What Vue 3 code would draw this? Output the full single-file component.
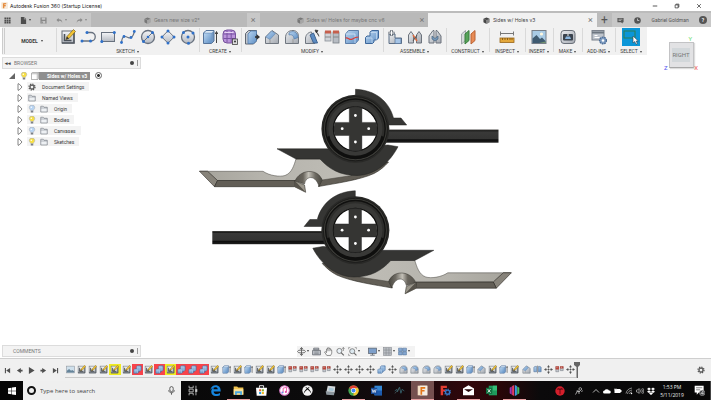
<script setup>
import { ref } from 'vue'

const groups = [
  { name: 'SKETCH', cls: 'w-sketch', icons: ['sketch', 'line', 'rect', 'spline', 'circle', 'polygon', 'circle3'] },
  { name: 'CREATE', cls: 'w-create', icons: ['box', 'form'] },
  { name: 'MODIFY', cls: 'w-modify', icons: ['presspull', 'chamfer', 'fillet', 'draft', 'table', 'split', 'combine'] },
  { name: 'ASSEMBLE', cls: 'w-assemble', icons: ['component', 'joint', 'asbuilt'] },
  { name: 'CONSTRUCT', cls: 'w-construct', icons: ['plane'] },
  { name: 'INSPECT', cls: 'w-inspect', icons: ['measure'] },
  { name: 'INSERT', cls: 'w-insert', icons: ['image'] },
  { name: 'MAKE', cls: 'w-make', icons: ['printer'] },
  { name: 'ADD-INS', cls: 'w-addins', icons: ['addin'] },
  { name: 'SELECT', cls: 'w-select', icons: ['select'] },
]

const tree = [
  { label: 'Document Settings', icon: 'gear' },
  { label: 'Named Views', icon: 'folder' },
  { label: 'Origin', icon: 'folder', bulb: 'off' },
  { label: 'Bodies', icon: 'folder', bulb: 'on' },
  { label: 'Canvases', icon: 'folder', bulb: 'off' },
  { label: 'Sketches', icon: 'folder', bulb: 'on' },
]

const codes = {
  i: 'canvas', s: 'sketch', c: 'combine', e: 'box', j: 'jointorigin', m: 'move', f: 'fillet', h: 'chamfer', r: 'mirror',
}
const history = 'isssYsCsCYCCCsesessejjjjmmmmcmffffssehseshrmjm'.split('').map((k) => {
  const mark = k === 'Y' ? 'yellow' : k === 'C' ? 'red' : ''
  const key = k === 'Y' ? 's' : k.toLowerCase()
  return { icon: codes[key], mark }
})

const navTools = ['orbit', 'look', 'hand', 'zoom', 'fit']
const displayTools = ['monitor', 'grid', 'views']
const play = ['first', 'prev', 'play', 'next', 'last']

const apps = [
  { icon: 'taskview' }, { icon: 'edge' }, { icon: 'explorer', open: true }, { icon: 'store' }, { icon: 'itunes' },
  { icon: 'xbox' }, { icon: 'drive' }, { icon: 'chrome', open: true }, { icon: 'word' }, { icon: 'sonic' },
  { icon: 'fusion', open: true, active: true }, { icon: 'freecad' }, { icon: 'mail', open: true }, { icon: 'excel' },
  { icon: 'stripes', open: true },
]
const tray = ['pen', 'chevron', 'cloud', 'battery', 'wifi', 'sound', 'dropbox']
const query = ref('')
</script>

<template>
  <div class="app">
    <svg class="defs" aria-hidden="true">
      <defs>
        <linearGradient id="blue" x1="0" y1="0" x2="1" y2="1"><stop offset="0" stop-color="#b9d5f0" /><stop offset="1" stop-color="#5f8fc4" /></linearGradient>
        <linearGradient id="grey" x1="0" y1="0" x2="0" y2="1"><stop offset="0" stop-color="#f5f6f8" /><stop offset="1" stop-color="#b4b9c1" /></linearGradient>
        <linearGradient id="dim" x1="0" y1="0" x2="1" y2="1"><stop offset="0" stop-color="#eceef1" /><stop offset="1" stop-color="#a3a8b0" /></linearGradient>
      </defs>
      <symbol id="sketch" viewBox="0 0 16 16"><rect x="2" y="2" width="12" height="12" fill="url(#grey)" stroke="#666c75" /><path d="M2 14h12V2" fill="none" stroke="#555b63" stroke-width="1.600" /><path d="M4.500 5v6.500h7" fill="none" stroke="#4a5058" stroke-width="1.500" /><path d="M6 10.500l1-3 6.500-7 2 2-6.500 7z" fill="#f3c435" stroke="#7d6420" stroke-width=".7" /><path d="M6 10.500l1-3 2 2z" fill="#333" /></symbol>
      <symbol id="line" viewBox="0 0 16 16"><path d="M2 12h9a4 4 0 0 0 0-8.500H7" fill="none" stroke="#68717e" stroke-width="1.300" /><g fill="#2f70c8"><circle cx="2" cy="12" r="1.500" /><circle cx="10.500" cy="12" r="1.500" /><circle cx="7" cy="3.500" r="1.500" /></g></symbol>
      <symbol id="rect" viewBox="0 0 16 16"><rect x="1.500" y="3.500" width="13" height="9" fill="url(#grey)" stroke="#68717e" /><g fill="#2f70c8"><circle cx="1.800" cy="12.500" r="1.500" /><circle cx="14.300" cy="3.500" r="1.500" /></g></symbol>
      <symbol id="spline" viewBox="0 0 16 16"><path d="M1.500 14C2 6 5 7 8 8.500S13 8 14.500 2.500" fill="none" stroke="#68717e" stroke-width="1.200" /><g fill="#2f70c8"><circle cx="1.500" cy="13.500" r="1.400" /><circle cx="4" cy="7.500" r="1.400" /><circle cx="11" cy="8.500" r="1.400" /><circle cx="14.300" cy="2.500" r="1.400" /></g></symbol>
      <symbol id="circle" viewBox="0 0 16 16"><circle cx="8" cy="8" r="6.500" fill="url(#grey)" stroke="#68717e" stroke-width="1.300" /><path d="M3.500 12.500l9-9" stroke="#68717e" /><g fill="#2f70c8"><circle cx="3.500" cy="12.500" r="1.500" /><circle cx="8" cy="8" r="1.300" /><circle cx="12.500" cy="3.500" r="1.500" /></g></symbol>
      <symbol id="polygon" viewBox="0 0 16 16"><path d="M8 1.800L14.200 8 8 14.200 1.800 8z" fill="url(#grey)" stroke="#68717e" /><g fill="#2f70c8"><circle cx="8" cy="2" r="1.500" /><circle cx="14" cy="8" r="1.500" /><circle cx="8" cy="14" r="1.500" /><circle cx="2" cy="8" r="1.500" /></g></symbol>
      <symbol id="circle3" viewBox="0 0 16 16"><circle cx="8" cy="8" r="6.500" fill="url(#grey)" stroke="#68717e" stroke-width="1.300" /><g fill="#2f70c8"><circle cx="3.500" cy="3.500" r="1.500" /><circle cx="8" cy="8" r="1.500" /><circle cx="13" cy="4" r="1.500" /><circle cx="8.500" cy="14.300" r="1.500" /></g></symbol>
      <symbol id="box" viewBox="0 0 16 16"><path d="M1.500 4L4 1.500h8V12l-2.500 2.500h-8z" fill="#7399c4" stroke="#56749b" /><path d="M2 4.500h7.500v9.500H2z" fill="url(#blue)" /><path d="M2.500 3.800L4.300 2H11.500L9.700 3.800z" fill="#dbe9f6" /><path d="M14.500 14V3m-1.300 2l1.300-2.500L15.700 5" fill="none" stroke="#444" /></symbol>
      <symbol id="form" viewBox="0 0 16 16"><rect x="1" y="1" width="12.500" height="13" rx="4" fill="#b993da" stroke="#74519a" /><path d="M5 1.500v12M9.200 1.500v12M1.500 5h12M1.500 9.500h12" stroke="#7a54a3" /><path d="M2.500 3.500h9" stroke="#e7d5f5" /><rect x="10.500" y="10" width="5" height="5.500" fill="#ddd" stroke="#444" stroke-width=".8" /><circle cx="13" cy="12.500" r="1" fill="#333" /></symbol>
      <symbol id="presspull" viewBox="0 0 16 16"><path d="M1.500 4.500L4.500 1.500h8V12l-3 3h-8z" fill="#c1c6cd" stroke="#5f6772" /><path d="M4 5l3-3h5.500V12l-3 2.500H4z" fill="url(#blue)" stroke="#547eae" stroke-width=".8" /><path d="M11 8h4" stroke="#333" stroke-width="1.600" /><path d="M12.500 5L16 8l-3.500 3z" fill="#333" /></symbol>
      <symbol id="chamfer" viewBox="0 0 16 16"><path d="M1.500 8L8 1.500l6.500 4.500v8.500h-13z" fill="url(#dim)" stroke="#707780" /><path d="M1.800 8L7.500 2l4 2.500L6 10.500z" fill="url(#blue)" stroke="#698bb3" stroke-width=".7" /><path d="M6 10.500V14" stroke="#999" /></symbol>
      <symbol id="fillet" viewBox="0 0 16 16"><path d="M1.500 14.500V9C1.500 4 4.500 1.500 9 1.500c4 0 5.500 3 5.500 6v7z" fill="url(#dim)" stroke="#707780" /><path d="M5 4c4-3 8.500-1 9 4.500l-4 1.500C10 7 8 5 5 6z" fill="url(#blue)" stroke="#547eae" stroke-width=".7" /><path d="M9 10v4" stroke="#999" /></symbol>
      <symbol id="draft" viewBox="0 0 16 16"><path d="M1.500 14.500V9C2 5 5 3 7.500 3L11 14.500z" fill="url(#dim)" stroke="#707780" /><path d="M6 6l3.500-2 4 10H9.500z" fill="#5c8bc2" stroke="#406591" /><path d="M11.500 2.500c2 1 3 3 3.500 5M11 1l3 .5-1.500 2.500z" fill="#333" stroke="#333" stroke-width=".7" /></symbol>
      <symbol id="table" viewBox="0 0 16 16"><rect x="1" y="3" width="6" height="9" fill="#cfd3d8" stroke="#8b9198" stroke-width=".8" /><rect x="9" y="3" width="6" height="11" fill="#b7bcc3" stroke="#777d85" stroke-width=".8" /><path d="M1 1.500h6v3H1zM9 1.500h6v3H9z" fill="#c65f4c" /><path d="M1 8h6M9 8h6" stroke="#888" /></symbol>
      <symbol id="jointorigin" viewBox="0 0 16 16"><path d="M1.500 3h5v9h-5zM9.500 3h5v7h-5z" fill="#c3c7cd" stroke="#777d85" /><path d="M1 2h6v6H1zM9 2h6v4H9z" fill="#b9483c" /><path d="M2.500 4h2M10.500 4h2" stroke="#e9c5bf" stroke-width="1.200" /></symbol>
      <symbol id="split" viewBox="0 0 16 16"><path d="M1.500 5l3-3.500h10V11l-3 3.500h-10z" fill="url(#blue)" stroke="#5d7fa9" /><path d="M1.500 5H11v9" fill="none" stroke="#dceafa" stroke-width=".7" /><path d="M1.500 9c3-1 4 3 7 1s4-2 6-2" fill="none" stroke="#db3c36" stroke-width="1.200" /></symbol>
      <symbol id="combine" viewBox="0 0 16 16"><path d="M6 3l2-1.500h6.500V9l-2 2H10v2l-1.500 1.500h-7V8.500L3 7h3z" fill="url(#blue)" stroke="#3c669a" /><path d="M2 9h6v5M6.500 3.500h6v7" fill="none" stroke="#d9e8f8" stroke-width=".6" /></symbol>
      <symbol id="component" viewBox="0 0 16 16"><path d="M2 5h6v4h6.500v5.500H2z" fill="url(#dim)" stroke="#5b6e86" /><path d="M8 9.500h6v5H8z" fill="#a5c4e6" stroke="#587396" stroke-width=".7" /><path d="M4.500 1v6M1.500 4h6" stroke="#525b66" stroke-width="2.400" /><path d="M4.500 1.500v5M2 4h5" stroke="#fff" /></symbol>
      <symbol id="joint" viewBox="0 0 16 16"><path d="M1.500 14V6L4 2.500 6.500 6v8zM9.500 14V6L12 2.500 14.500 6v8z" fill="url(#dim)" stroke="#6c737c" /><path d="M6 6l4 6" stroke="#de6d42" stroke-width="1.500" /><path d="M6 12l4-6" stroke="#555" /></symbol>
      <symbol id="asbuilt" viewBox="0 0 16 16"><path d="M2 14V7l4-5.500h1V14zM9 14V1.500h1L14 7v7z" fill="url(#dim)" stroke="#6c737c" /><path d="M5 7l3 2.500L11 7v3l-3 2-3-2z" fill="#7599bb" stroke="#4c6680" stroke-width=".7" /></symbol>
      <symbol id="mirror" viewBox="0 0 16 16"><path d="M1.500 4l2-1.500h3V12h-5zM9.500 2.500h3l2 1.500v8h-5z" fill="url(#blue)" stroke="#53729a" /><path d="M8 1v14" stroke="#666" /></symbol>
      <symbol id="plane" viewBox="0 0 16 16"><path d="M1.500 5l4-3.500v10l-4 3.500z" fill="#d7dadc" stroke="#92989e" stroke-width=".8" /><path d="M5 5l4-3.500v10L5 15z" fill="#56a35a" stroke="#397d3d" /><path d="M11 5l4-3.500v10L11 15z" fill="#e88b55" stroke="#ba6334" /></symbol>
      <symbol id="measure" viewBox="0 0 16 16"><path d="M1 4.500h14M1.500 2.500v4m13-4v4" stroke="#777" /><rect x="1" y="9" width="14" height="4.500" fill="#e4a83b" stroke="#98651a" stroke-width=".8" /><path d="M3.500 9v2M6 9v2M8.500 9v2M11 9v2M13 9v2" stroke="#7a5010" stroke-width=".8" /></symbol>
      <symbol id="image" viewBox="0 0 16 16"><rect x="1" y="1.500" width="14" height="13" fill="#a9cbe5" stroke="#777e87" /><circle cx="10.500" cy="5" r="1.600" fill="#fff8df" /><path d="M1.500 14V9.500l4-3.500 3.500 4 2-1.500L14.500 12v2z" fill="#3f5b71" /><path d="M8 14l6.500-1.500V14z" fill="#73936d" /></symbol>
      <symbol id="canvas" viewBox="0 0 16 16"><rect x="1" y="2" width="14" height="12" fill="#cfe0ec" stroke="#8d949c" /><path d="M1.500 13.500V10l4-3 3.500 3 2-1 3.500 2v2.500z" fill="#66849a" /></symbol>
      <symbol id="printer" viewBox="0 0 16 16"><rect x="1" y="1.500" width="14" height="13" rx="3" fill="url(#dim)" stroke="#6a7079" /><rect x="3" y="5" width="10" height="6.500" rx="1" fill="#39424d" /><path d="M5 10l1-2.500h4l1 2.500z" fill="#8ab6df" /><path d="M8 5v2" stroke="#eee" /></symbol>
      <symbol id="addin" viewBox="0 0 16 16"><rect x="1" y="1.500" width="12" height="9.500" fill="#bec4cc" stroke="#7b828c" /><path d="M1 3.500h12" stroke="#6d7680" stroke-width="2" /><path d="M3.500 6.500h3M3.500 8.500h5" stroke="#fff" /><circle cx="12" cy="11.500" r="3.400" fill="#7e9cc1" stroke="#4c6c95" stroke-dasharray="1.600 .8" stroke-width="1.300" /><circle cx="12" cy="11.500" r="1.200" fill="#fff" /></symbol>
      <symbol id="select" viewBox="0 0 18 18"><rect width="18" height="18" fill="#0b96d8" /><rect x="2" y="3" width="11" height="7" fill="none" stroke="#2c7f55" /><path d="M11 8v7l1.700-1.500 1.300 2.800 1.400-.7-1.300-2.600h2.200z" fill="#fff" stroke="#35424d" stroke-width=".6" /></symbol>
      <symbol id="cube" viewBox="0 0 16 16"><path d="M1 4l7-3 7 3v8l-7 4-7-4z" fill="currentColor" /><path d="M8 7v9l7-4V4z" fill="#fff" opacity=".35" /><path d="M1 4l7 3v9" fill="none" stroke="#eee" stroke-width=".5" /></symbol>
      <symbol id="apps" viewBox="0 0 16 16"><path d="M1 1h4v4H1zM6 1h4v4H6zM11 1h4v4h-4zM1 6h4v4H1zM6 6h4v4H6zM11 6h4v4h-4zM1 11h4v4H1zM6 11h4v4H6zM11 11h4v4h-4z" fill="#4d4d4d" /></symbol>
      <symbol id="file" viewBox="0 0 16 16"><path d="M2 0h7v5h5v11H2zM10 0l4 4h-4z" fill="#4d4d4d" /></symbol>
      <symbol id="save" viewBox="0 0 16 16"><path d="M1 1h14v14H1z" fill="#888" /><path d="M4 1h8v5H4zM4 9h8v6H4z" fill="#c6c6c6" /><path d="M5 10h2v4H5z" fill="#888" /></symbol>
      <symbol id="undo" viewBox="0 0 16 16"><path d="M6 2L1 7l5 5V9c5-1 7 1 8 5 1-6-2-9-8-9z" fill="#8b8b8b" /></symbol>
      <symbol id="gear" viewBox="0 0 16 16"><circle cx="8" cy="8" r="6" fill="none" stroke="#555" stroke-width="2.500" stroke-dasharray="2.600 2.100" /><circle cx="8" cy="8" r="4" fill="none" stroke="#555" stroke-width="2.500" /></symbol>
      <symbol id="folder" viewBox="0 0 16 16"><path d="M1.500 14V2.500h5l1.500 2h6.500V14z" fill="#edf0f3" stroke="#737981" stroke-width="1.300" /><path d="M1.500 6h13" stroke="#737981" /></symbol>
      <symbol id="bulb" viewBox="0 0 16 16"><path d="M5.500 11C4.500 8.500 2.500 8 2.500 5.200a5.500 5 0 0 1 11 0C13.500 8 11.500 8.500 10.500 11z" fill="currentColor" stroke="#a3a7ad" /><path d="M5.500 11.500h5V15h-5z" fill="#7b7f86" /><circle cx="6.500" cy="4.500" r="1.500" fill="#fff" /></symbol>
      <symbol id="body" viewBox="0 0 16 16"><path d="M1 3l2-2h12v12l-2 2H1z" fill="#fff" stroke="#777" /><path d="M1 3.500h11.500V15M12.500 3.500L15 1" fill="none" stroke="#777" /></symbol>
      <symbol id="move" viewBox="0 0 16 16"><path d="M8 3v10M3 8h10" stroke="#5b5b5b" stroke-width="1.200" stroke-dasharray="3.500 3" /><path d="M8 0l2.500 4h-5zM8 16l2.500-4h-5zM0 8l4-2.500v5zM16 8l-4-2.500v5z" fill="#555" /><rect x="7" y="7" width="2" height="2" fill="#555" /></symbol>
      <symbol id="first" viewBox="0 0 16 16"><path d="M2 2h2.500v12H2zM14 2v12L5 8z" fill="#4f4f4f" /></symbol>
      <symbol id="prev" viewBox="0 0 16 16"><path d="M11 2v12L2 8zM11 6h4v4h-4z" fill="#4f4f4f" /></symbol>
      <symbol id="play" viewBox="0 0 16 16"><path d="M2 0l13 8L2 16z" fill="#4f4f4f" /></symbol>
      <symbol id="next" viewBox="0 0 16 16"><path d="M5 2v12l9-6zM1 6h4v4H1z" fill="#4f4f4f" /></symbol>
      <symbol id="last" viewBox="0 0 16 16"><path d="M11.500 2H14v12h-2.500zM2 2v12l9-6z" fill="#4f4f4f" /></symbol>
      <symbol id="orbit" viewBox="0 0 16 16"><path d="M8 1v14M5.500 3.500L8 1l2.500 2.500M5.500 12.500L8 15l2.500-2.500" fill="none" stroke="#555" stroke-width="1.500" /><ellipse cx="8" cy="8" rx="7" ry="2.700" fill="none" stroke="#555" stroke-width="1.500" /></symbol>
      <symbol id="look" viewBox="0 0 16 16"><path d="M1 6h14v8H1zM3 2h9v3H3z" fill="#bfc3c9" stroke="#5d6269" stroke-width="1.300" /><path d="M4 9h8M4 12h8" stroke="#5d6269" /></symbol>
      <symbol id="hand" viewBox="0 0 16 16"><path d="M5 15L1 9l1.500-1 2 2V3.500h1.800V1.500h2V2h2v1.500h2V6h1.500v5l-2 4z" fill="#fafafa" stroke="#555" stroke-width="1.100" /><path d="M6.500 3.500v4m2-5v5m2-4v4" stroke="#555" stroke-width=".8" /></symbol>
      <symbol id="zoom" viewBox="0 0 16 16"><circle cx="6" cy="7" r="4.500" fill="#eaf2f8" stroke="#666" stroke-width="1.300" /><path d="M9 10l5 5" stroke="#666" stroke-width="2" /><path d="M13 1v6M11 3l2-2 2 2" fill="none" stroke="#444" /></symbol>
      <symbol id="fit" viewBox="0 0 16 16"><path d="M1 4V1h3M12 1h3v3M1 12v3h3" fill="none" stroke="#777" /><circle cx="7.500" cy="7.500" r="4.500" fill="#dce8ef" stroke="#666" stroke-width="1.300" /><path d="M11 11l4 4" stroke="#666" stroke-width="2" /></symbol>
      <symbol id="monitor" viewBox="0 0 16 16"><rect x="1" y="2" width="14" height="9.500" fill="#7d9fca" stroke="#59626e" stroke-width="1.300" /><path d="M4 14.500h8M8 11v3" stroke="#59626e" stroke-width="1.500" /></symbol>
      <symbol id="grid" viewBox="0 0 16 16"><rect x="1" y="1" width="14" height="14" fill="#b9bdc3" stroke="#85898f" /><path d="M5.500 1v14M10.500 1v14M1 5.500h14M1 10.500h14" stroke="#85898f" /></symbol>
      <symbol id="views" viewBox="0 0 16 16"><path d="M1 2h6.500v5.500H1zM8.500 2H15v5.500H8.500zM1 8.500h6.500V14H1zM8.500 8.500H15V14H8.500z" fill="#85a8d2" stroke="#53729a" /></symbol>
      <symbol id="win" viewBox="0 0 16 16"><path d="M0 2.300L7 1.300v6.200H0zM8 1.200L16 0v7.500H8zM0 8.500h7v6.200l-7-1zM8 8.500h8V16l-8-1.200z" fill="#fff" /></symbol>
      <symbol id="mic" viewBox="0 0 16 16"><rect x="5" y="1" width="6" height="9" rx="3" fill="none" stroke="#333" stroke-width="1.300" /><path d="M3 7.500c0 6 10 6 10 0M8 12v3.500" fill="none" stroke="#333" stroke-width="1.300" /></symbol>
      <symbol id="taskview" viewBox="0 0 16 16"><path d="M3 1v3h6V1M3 15v-3h6v3M3 6h6v4H3zM13 1v14" fill="none" stroke="#ccc" stroke-width="1.200" /><path d="M12 6h3v4h-3z" fill="#ccc" /></symbol>
      <symbol id="edge" viewBox="0 0 16 16"><path d="M.5 7.200C1.200 2.800 4.300.3 8.200.3c4.800 0 7.300 3.500 7.300 8v1H5.300c.2 4.600 6 4.400 9.200 2.400v3.200c-5.500 2.600-12.700.9-12.700-5.200 0-3.400 2-5.400 4.200-6.300-.6.700-.8 1.600-.9 2.900h6.200C11.500 1.500 3.500 2.500.5 7.200z" fill="#1685de" /></symbol>
      <symbol id="explorer" viewBox="0 0 16 16"><path d="M1 2h5l1.500 1.500H15V14H1z" fill="#f2c451" /><path d="M1 6h14v8H1z" fill="#fbe29b" /><path d="M3 9h10v5.500h-2.500V12h-5v2.500H3z" fill="#4aa6df" /></symbol>
      <symbol id="store" viewBox="0 0 16 16"><path d="M5 4V1h6v3" fill="none" stroke="#fff" stroke-width="1.300" /><path d="M0 4h16l-1 11.500H1z" fill="#fff" /><path d="M4.500 6.200h3v3h-3z" fill="#e85b37" /><path d="M8.500 6.200h3v3h-3z" fill="#83b82c" /><path d="M4.500 10.200h3v3h-3z" fill="#279fe0" /><path d="M8.500 10.200h3v3h-3z" fill="#f6bb22" /></symbol>
      <symbol id="itunes" viewBox="0 0 16 16"><circle cx="8" cy="8" r="7" fill="#fff" stroke="#d774c4" stroke-width="1.500" /><path d="M6 11V4.500l5-1V10" fill="none" stroke="#e94aa2" stroke-width="1.300" /><circle cx="5" cy="11" r="1.500" fill="#6c86e8" /><circle cx="10" cy="10" r="1.500" fill="#e94aa2" /></symbol>
      <symbol id="xbox" viewBox="0 0 16 16"><circle cx="8" cy="8" r="7.500" fill="#f4f4f4" /><path d="M3 2.500C6 2 7 4 8 4.500 9 4 10 2 13 2.500c-2 0-3 1.500-4 2.700 2.500 2.300 4.500 5 4.500 7.300C12 10 10 8 8 6.500 6 8 4 10 2.500 12.500c0-2.300 2-5 4.500-7.300C6 4 5 2.500 3 2.500z" fill="#111" /></symbol>
      <symbol id="drive" viewBox="0 0 16 16"><path d="M4 1l11 1-1 9-12-1z" fill="#d3d8db" /><path d="M1 9l13 1-1 5-11-1z" fill="#8b969d" /><path d="M6 4l7 1-1 4-7-1z" fill="#a6c5d5" /></symbol>
      <symbol id="chrome" viewBox="0 0 16 16"><circle cx="8" cy="8" r="7.500" fill="#45a651" /><path d="M8 8L1.500 4.200A7.500 7.500 0 0 1 14.500 4.200z" fill="#e34133" /><path d="M8 8l6.500-3.800A7.500 7.500 0 0 1 8 15.500z" fill="#f5c633" /><path d="M8 4.200h6.500L10 10z" fill="#f5c633" /><circle cx="8" cy="8" r="3.700" fill="#fff" /><circle cx="8" cy="8" r="2.900" fill="#4285f4" /></symbol>
      <symbol id="word" viewBox="0 0 16 16"><path d="M5 1h11v14H5z" fill="#3588d5" /><path d="M5 8h11v7H5z" fill="#1c5aad" /><path d="M0 4h9v9H0z" fill="#1b4f9e" /><path d="M1.500 6l1.500 5 1.500-4 1.500 4 1.500-5" fill="none" stroke="#fff" /></symbol>
      <symbol id="sonic" viewBox="0 0 16 16"><path d="M1 9l3-3 1 4 3-7 2 9 2-6 3 3" fill="none" stroke="#355e68" stroke-width="1.300" /><path d="M1 12c3-1 5-6 7-8" stroke="#4d696c" fill="none" /></symbol>
      <symbol id="fusion" viewBox="0 0 16 16"><path d="M1 1h14v14H1z" fill="#f6dfc4" /><path d="M4 1h11v14H4z" fill="#f5ede3" /><path d="M5 3h7v2.300H7.500v2H11v2.200H7.500V14H5z" fill="#e27619" /></symbol>
      <symbol id="freecad" viewBox="0 0 16 16"><path d="M1 1h9v3.500H4.500v2H8v3H4.500V15H1z" fill="#e43c32" /><circle cx="11" cy="10.500" r="3" fill="#22112a" stroke="#3579ca" stroke-width="2" /><circle cx="11" cy="10.500" r="4.500" fill="none" stroke="#3579ca" stroke-dasharray="1.600 1.900" stroke-width="1.500" /></symbol>
      <symbol id="mail" viewBox="0 0 16 16"><path d="M0 5l8-4.500L16 5v10H0z" fill="#fff" /><path d="M1.500 6h13L8 10z" fill="#260508" /></symbol>
      <symbol id="excel" viewBox="0 0 16 16"><path d="M4 1h12v14H4z" fill="#1f9a5c" /><path d="M10 1h6v7h-6z" fill="#35bd77" /><path d="M0 4h9v9H0z" fill="#117340" /><path d="M2.500 6l4 5m0-5l-4 5" stroke="#fff" stroke-width="1.200" /></symbol>
      <symbol id="stripes" viewBox="0 0 16 16"><path d="M1 4l3-2v12l-3-2z" fill="#9b35b4" /><path d="M4.500 1.500L7.500 0v16l-3-1.500z" fill="#e23c64" /><path d="M8.500 0l3 1.500v13l-3 1.500z" fill="#3f9be0" /><path d="M12 2l3 2v8l-3 2z" fill="#42ba63" /></symbol>
      <symbol id="trend" viewBox="0 0 16 16"><circle cx="8" cy="8" r="7.500" fill="#d41f2b" /><path d="M3 5h10M8 5v8M5 3l3 3 3-3" fill="none" stroke="#65080f" stroke-width="1.500" /></symbol>
      <symbol id="pen" viewBox="0 0 16 16"><circle cx="10.500" cy="4" r="2.700" fill="none" stroke="#ddd" stroke-width="1.300" /><path d="M1 15l4-7 3 2 3-3M3 8h5v6M13 10l2-3" fill="none" stroke="#ddd" stroke-width="1.400" /></symbol>
      <symbol id="chevron" viewBox="0 0 16 16"><path d="M2 11l6-6 6 6" fill="none" stroke="#eee" stroke-width="1.500" /></symbol>
      <symbol id="cloud" viewBox="0 0 16 16"><path d="M3 13a3 3 0 0 1 0-6 5 4.500 0 0 1 9 0 3 3 0 0 1 1 6z" fill="#fff" /></symbol>
      <symbol id="battery" viewBox="0 0 16 16"><path d="M1 4h12v2h2v4h-2v2H1z" fill="#fff" /><path d="M1 3v4M4 2v4" stroke="#bbb" stroke-width="1.300" /></symbol>
      <symbol id="wifi" viewBox="0 0 16 16"><path d="M2 13C3 7 7 3 14 2M5 14c1-5 4-7 9-8M9 14c1-3 2-4 5-4" fill="none" stroke="#bbb" stroke-width="1.400" /><circle cx="13" cy="13" r="1.500" fill="#fff" /></symbol>
      <symbol id="sound" viewBox="0 0 16 16"><path d="M1 6h2l3-3v10L3 10H1zM8 5c2 2 2 4 0 6M10.500 3.500c3 3 3 6 0 9M13 2c3.500 4 3.500 8 0 12" fill="none" stroke="#ddd" stroke-width="1.200" /></symbol>
      <symbol id="dropbox" viewBox="0 0 16 16"><path d="M4 1l4 2.800L4 6.500 0 3.800zM12 1l4 2.800-4 2.700-4-2.700zM4 6.500L8 9.300 4 12 0 9.300zM12 6.500l4 2.800-4 2.700-4-2.700zM8 10.500l4 2.700L8 16l-4-2.800z" fill="#fff" /></symbol>
      <symbol id="notice" viewBox="0 0 16 16"><path d="M1 1h13v10H7l-3 3v-3H1z" fill="#fff" /><path d="M3 4h9M3 7h6" stroke="#555" /><circle cx="12" cy="11.500" r="4" fill="#3b3d40" stroke="#aaa" stroke-width=".8" /><path d="M13 14V9l-3 3.500h4" fill="none" stroke="#fff" stroke-width=".8" /></symbol>
      <symbol id="chat" viewBox="0 0 16 16"><path d="M1 2h14v10h-2v3l-4-3H1z" fill="#555" /><path d="M3.500 5h9M3.500 8h6" stroke="#ddd" stroke-width="1.300" /></symbol>
      <symbol id="clock" viewBox="0 0 16 16"><circle cx="8" cy="8" r="7.500" fill="#555" /><path d="M8 3.500V8h4" fill="none" stroke="#ddd" stroke-width="1.700" /></symbol>
    </svg>

    <header class="titlebar">
      <svg class="logo"><use href="#fusion" /></svg>
      <span class="grow">Autodesk Fusion 360 (Startup License)</span>
      <button class="winbtn" aria-label="Minimize"><svg viewBox="0 0 8 8"><path d="M1 4h6" stroke="#222" /></svg></button>
      <button class="winbtn" aria-label="Restore"><svg viewBox="0 0 8 8"><path d="M1.500 2.500h4v4h-4zM2.500 2V1.500h4v4H6" fill="none" stroke="#222" stroke-width=".9" /></svg></button>
      <button class="winbtn" aria-label="Close"><svg viewBox="0 0 8 8"><path d="M1.500 1.500l5 5m0-5l-5 5" stroke="#222" stroke-width=".9" /></svg></button>
    </header>

    <nav class="tabs">
      <div class="quick">
        <button aria-label="Data panel"><svg><use href="#apps" /></svg></button>
        <button class="file" aria-label="File"><svg><use href="#file" /></svg><i class="caret" /></button>
        <button aria-label="Save"><svg><use href="#save" /></svg></button>
        <button aria-label="Undo"><svg><use href="#undo" /></svg><i class="caret faint" /></button>
        <button aria-label="Redo"><svg class="flip"><use href="#undo" /></svg><i class="caret faint" /></button>
      </div>
      <button class="tab first"><svg><use href="#cube" /></svg>Gears new size v2*</button>
      <button class="close" aria-label="Close Gears">×</button>
      <div class="tab"><button class="name"><svg><use href="#cube" /></svg>Sides w/ Holes for maybe cnc v6</button><button class="close inner" aria-label="Close tab">×</button></div>
      <div class="tab current"><button class="name"><svg><use href="#cube" /></svg>Sides w/ Holes v3</button><button class="close inner" aria-label="Close tab">×</button></div>
      <button class="plus" aria-label="New design">+</button>
      <div class="account">
        <svg><use href="#chat" /></svg>
        <svg><use href="#clock" /></svg>
        <a href="#">Gabriel Goldman</a>
        <button class="help" aria-label="Help">?</button>
      </div>
    </nav>

    <div class="toolbar">
      <button class="model">MODEL <i class="caret" /></button>
      <section v-for="g in groups" :key="g.name" class="group" :class="g.cls">
        <div class="tools">
          <button v-for="i in g.icons" :key="i" :aria-label="i"><svg><use :href="'#' + i" /></svg></button>
        </div>
        <button class="label">{{ g.name }}<i class="caret" /></button>
      </section>
    </div>

    <main class="stage">
      <svg class="model-view" viewBox="0 55 711 303" preserveAspectRatio="xMidYMin meet">
        <defs>
          <linearGradient id="face" x1="0" y1="0" x2="1" y2="0"><stop offset="0" stop-color="#a5a39b" /><stop offset=".4" stop-color="#b5b3ac" /><stop offset="1" stop-color="#bfbdb6" /></linearGradient>
          <linearGradient id="arch" x1="0" y1="0" x2="1" y2="0"><stop offset="0" stop-color="#56534c" /><stop offset=".3" stop-color="#68645c" /><stop offset=".5" stop-color="#c3c0b7" /><stop offset=".75" stop-color="#6e6b63" /><stop offset="1" stop-color="#494740" /></linearGradient>
          <linearGradient id="rail" x1="0" y1="0" x2="0" y2="1"><stop offset="0" stop-color="#4d4c49" /><stop offset=".1" stop-color="#191918" /><stop offset=".18" stop-color="#393938" /><stop offset=".7" stop-color="#343433" /><stop offset=".78" stop-color="#0d0d0d" /><stop offset="1" stop-color="#20201f" /></linearGradient>
          <g id="weapon">
            <path d="M318.500 186.500C335 183.500 360 180 374 173.500 380 170.500 385 166 388.500 162L350 160 320 172 322 180z" fill="#625e56" stroke="#27251f" stroke-width=".6" />
            <path d="M199.500 171.300H263C270 176 280 177 285 175.500 292 173 294 165 296 159H321L352 175.500 322 180C319 171 301 168 297 181L217.500 180.500 207.500 171.300z" fill="url(#face)" stroke="#45423c" stroke-width=".5" />
            <path d="M199.500 171.300H207.500L217.500 180.500 214.500 186.700z" fill="#87837a" stroke="#302e29" stroke-width=".6" />
            <path d="M217.500 180.500H295L294.500 186.700H214.500z" fill="#625e56" stroke="#25231f" stroke-width=".6" />
            <path d="M295 181C300 169 318 168 322 180L319 186.500C316 175 306 175 304.500 184z" fill="url(#arch)" stroke="#35322d" stroke-width=".5" />
            <path d="M295 181L304.500 185 305.700 192.300 294.500 186.700z" fill="#9b978c" stroke="#38352f" stroke-width=".6" />
            <path d="M295 181L305.700 192.300 294.500 186.700z" fill="#57534b" />
            <path d="M277 148.800H330L388 145 398 146.700C390 162 376 175 357 175.500 340 175.500 329 169 320 159H296z" fill="#353533" stroke="#20201f" stroke-width=".5" />
            <path d="M355.500 89.300C375 90 389 101 393.500 118H401L406.700 125H380L355.500 108z" fill="#363634" stroke="#20201f" stroke-width=".5" />
            <rect x="380" y="129.500" width="118.500" height="13.200" fill="url(#rail)" />
            <circle cx="355.400" cy="128.800" r="34" fill="#292927" />
            <circle cx="355.400" cy="128.800" r="32" fill="#3c3c38" stroke="#151514" stroke-width=".8" />
            <circle cx="355.400" cy="128.800" r="29.800" fill="#2d2d2b" stroke="#10100f" stroke-width="1.300" />
            <path d="M327 137A29.500 29.500 0 0 0 384 137L380 135A25.700 25.700 0 0 1 331 135z" fill="#0f0f0e" />
            <circle cx="355.400" cy="128.800" r="27" fill="#393937" />
            <circle cx="355.400" cy="128.800" r="22" fill="#fff" stroke="#0d0d0c" stroke-width="1.200" />
            <path d="M349.300 107.500Q355.400 106 361.900 107.500V122.400H376.500Q378 129 376.500 135.500H361.900V150.200Q355.400 152 349.300 150.200V135.500H334.500Q333 129 334.500 122.400H349.300z" fill="#353533" stroke="#222" stroke-width=".4" />
            <g fill="#fff"><circle cx="355.400" cy="115.500" r="1.400" /><circle cx="342.200" cy="128.700" r="1.400" /><circle cx="368.700" cy="128.700" r="1.400" /><circle cx="355.400" cy="142" r="1.400" /></g>
          </g>
        </defs>
        <use href="#weapon" />
        <use href="#weapon" transform="translate(710.8 101.500) scale(-1 1)" />
      </svg>

      <div class="cube">
        <span class="axis up">Y</span>
        <button class="face"><span>RIGHT</span></button>
        <div class="floor"><span class="axis depth">Z</span><span class="axis side">X</span></div>
      </div>

      <aside class="browser">
        <div class="panel"><span><b class="rew">◂◂</b>BROWSER</span><span class="pin"><i class="dot" /><i class="bar" /></span></div>
        <div class="root">
          <i class="open" />
          <svg class="bulb on"><use href="#bulb" /></svg>
          <button class="rootname"><svg><use href="#body" /></svg>Sides w/ Holes v3</button>
          <input type="radio" checked aria-label="Activate component" />
        </div>
        <ul>
          <li v-for="t in tree" :key="t.label">
            <svg class="tri" viewBox="0 0 6 8"><path d="M1 .8h1L5 4 2 7.200H1z" fill="#fff" stroke="#777" stroke-width=".9" /></svg>
            <button>
              <svg v-if="t.bulb" class="bulb" :class="t.bulb"><use href="#bulb" /></svg>
              <svg class="fold"><use :href="'#' + t.icon" /></svg>
              <span>{{ t.label }}</span>
            </button>
          </li>
        </ul>
      </aside>

      <div class="bottom">
        <div class="panel comments"><span>COMMENTS</span><span class="pin"><i class="dot" /><i class="bar" /></span></div>
        <div class="nav">
          <button v-for="n in navTools" :key="n" :aria-label="n"><svg><use :href="'#' + n" /></svg><i v-if="n === 'orbit' || n === 'fit'" class="caret" /></button>
          <i class="space" />
          <button v-for="n in displayTools" :key="n" :aria-label="n"><svg><use :href="'#' + n" /></svg><i class="caret" /></button>
        </div>
      </div>
    </main>

    <section class="timeline">
      <div class="play">
        <button v-for="p in play" :key="p" :aria-label="p"><svg><use :href="'#' + p" /></svg></button>
      </div>
      <div class="history">
        <button v-for="(h, n) in history" :key="n" :class="h.mark" :aria-label="h.icon"><svg><use :href="'#' + h.icon" /></svg></button>
      </div>
      <svg class="marker" viewBox="0 0 6 16"><path d="M0 0h6v3L4 5v11H2.500V5L0 3z" fill="#666" /></svg>
      <button class="settings" aria-label="Settings"><svg><use href="#gear" /></svg></button>
    </section>

    <footer class="taskbar">
      <button class="start" aria-label="Start"><svg><use href="#win" /></svg></button>
      <label class="search">
        <i class="ring" />
        <input v-model="query" type="text" placeholder="Type here to search" aria-label="Search" />
        <svg><use href="#mic" /></svg>
      </label>
      <div class="apps">
        <button v-for="a in apps" :key="a.icon" :class="{ isopen: a.open, active: a.active }" :aria-label="a.icon"><svg><use :href="'#' + a.icon" /></svg></button>
      </div>
      <div class="tray">
        <svg class="trend"><use href="#trend" /></svg>
        <svg v-for="t in tray" :key="t" :class="t"><use :href="'#' + t" /></svg>
      </div>
      <time class="clock"><span>1:53 PM</span><span>5/11/2019</span></time>
      <button class="notice" aria-label="Notifications"><svg><use href="#notice" /></svg></button>
    </footer>
  </div>
</template>

<style>
body { margin: 0; background: #fff; }
</style>

<style scoped>
.app {
  display: grid;
  grid-template-rows: auto auto auto 1fr auto auto;
  min-height: 100vh;
  font-family: Roboto, "Liberation Sans", sans-serif;
  font-size: 5px;
  line-height: 8px;
  color: #3c3c3c;
}
.app *, .app { box-sizing: border-box; }
button, input { font: inherit; color: inherit; background: none; border: 0; padding: 0; margin: 0; }
button { display: flex; align-items: center; justify-content: center; }
svg { display: block; flex: none; }
a { color: inherit; text-decoration: none; }
.defs { position: absolute; width: 0; height: 0; }
.caret { flex: none; width: 0; height: 0; border: 1px solid transparent; border-top: 2px solid #444; border-bottom: 0; margin-left: 3px; }
.caret.faint { border-top-color: #888; }
.grow { flex: 1; }

.titlebar { display: flex; align-items: center; height: 11px; padding: 0 8px 0 1px; font-family: Inter, sans-serif; color: #222; }
.logo { width: 7px; height: 7px; margin-right: 2px; }
.winbtn { width: 8px; margin-left: 14px; }
.winbtn svg { width: 6px; height: 6px; }

.tabs { display: flex; height: 16px; border-top: 2px solid #bcbcbc; background: #c8c8c8; color: #555; }
.quick { display: flex; align-items: center; gap: 9px; width: 91px; padding-left: 4px; }
.quick svg { width: 7px; height: 7px; }
.flip { transform: scaleX(-1); }
.quick .caret { margin-left: 2px; }
.tab { display: flex; align-items: center; justify-content: center; flex: 169; background: #b9b9b9; color: #777; font-family: Inter, sans-serif; }
.tab.first { flex: 156; }
.name { flex: 1; }
.tab svg { width: 7px; height: 7px; margin: 0 3px 0 6px; }
.tab.current { background: #f1f1f1; color: #444; }
.close { width: 13px; font-family: Roboto, sans-serif; font-size: 9px; color: #777; }
.plus { width: 15px; background: #bcbcbc; font-size: 12px; color: #555; }
.account { display: flex; align-items: center; width: 99px; padding: 0 4px 0 5px; justify-content: space-between; }
.account svg { width: 7px; height: 7px; }
.help { width: 8px; height: 8px; border-radius: 50%; background: #555; color: #fff; font-weight: bold; }

.toolbar { display: flex; width: fit-content; margin-left: 2px; height: 28px; background: #f1f1f1; }
.model { width: 54px; margin: 1px 0; padding-left: 3px; border-left: 3px double #ccc; font-weight: bold; }
.group { display: flex; flex-direction: column; align-items: center; gap: 2px; padding-top: 1px; }
.group::before { content: ""; align-self: flex-start; width: 1px; height: 24px; margin-bottom: -26px; background: #d9d9d9; }
.tools { display: flex; gap: 4px; height: 18px; align-items: center; }
.tools svg { width: 16px; height: 16px; }
.label { white-space: nowrap; height: 7px; line-height: 7px; }
.label .caret { border-width: 2px 1px 0; margin-left: 2px; }
.w-sketch { width: 143px; }
.w-create { width: 42px; }
.w-modify { width: 142px; }
.w-assemble { width: 63px; }
.w-construct { width: 43px; }
.w-inspect { width: 36px; }
.w-insert { width: 28px; }
.w-make { width: 29px; }
.w-addins { width: 33px; }
.w-select { width: 32px; }
.w-select svg { width: 18px; height: 18px; }

.stage { display: grid; grid-template: 1fr / 1fr; position: relative; }
.stage > * { grid-area: 1 / 1; }
.model-view { width: 100%; height: 100%; overflow: visible; min-height: 0; }
.panel { display: flex; align-items: center; justify-content: space-between; width: 139px; height: 12px; padding: 0 2px; background: #f3f3f3; border: 1px solid #dcdcdc; color: #777; }
.rew { margin-right: 3px; color: #444; }
.pin { display: flex; gap: 3px; align-items: center; }
.dot { width: 4px; height: 4px; border-radius: 50%; background: #444; }
.bar { width: 1px; height: 6px; background: #999; }
.browser { align-self: start; justify-self: start; padding: 2px 0 0 2px; }
.root { display: flex; align-items: center; height: 11px; margin: 1px 0 0 7px; gap: 5px; }
.open { width: 0; height: 0; border-left: 6px solid transparent; border-bottom: 6px solid #666; }
.bulb { width: 8px; height: 8px; }
.bulb.on { color: #f7df45; }
.bulb.off { color: #b8d4f2; }
.root .bulb { margin-right: -2px; }
.rootname { height: 8px; padding-right: 3px; background: #8f8f8f; color: #fff; font-weight: bold; }
.rootname svg { width: 8px; height: 8px; margin-right: 8px; background: #eee; }
.root input { appearance: none; width: 7px; height: 7px; border: 1px solid #666; border-radius: 50%; background: radial-gradient(#333 35%, #fff 45%); }
ul { list-style: none; margin: 0; padding: 0 0 0 15px; }
li { display: flex; align-items: center; gap: 4px; height: 11px; }
.tri { width: 6px; height: 8px; }
li button { height: 9px; padding: 0 5px 0 1px; background: #f3f3f3; gap: 4px; }
li .fold { width: 8px; height: 8px; }
li span { margin-left: 2px; }
.bottom { align-self: end; display: grid; grid-template-columns: 297px auto 1fr; align-items: center; padding-bottom: 1px; }
.comments { margin-left: 2px; padding-left: 10px; }
.nav { display: flex; align-items: center; gap: 3px; height: 11px; padding: 0 5px 0 0; background: #f3f3f3; }
.nav svg { width: 9px; height: 9px; }
.nav .caret { margin-left: 1px; }
.space { width: 2px; }

.cube { align-self: start; justify-self: end; display: flex; flex-direction: column; width: 34px; margin: -19px 13px 0 0; z-index: 1; font-size: 6px; }
.face { align-self: center; width: 25px; height: 26px; border: 1px solid #c3c3c5; border-bottom-color: #a7a7a7; background: #e2e2e4; box-shadow: 1px 1px 1px #ddd; color: #777; }
.face span { padding: 3px 0; line-height: 8px; background: #d2d7da; }
.floor { display: flex; justify-content: space-between; margin-top: -3px; }
.axis { line-height: 6px; }
.up { align-self: flex-end; padding-right: 6px; color: #67dd67; }
.depth { color: #5c5cf0; }
.side { color: #ef5555; }

.timeline { display: flex; align-items: center; height: 23px; border-top: 1px solid #cfcfcf; background: #f0f0f0; }
.play { display: flex; gap: 5px; padding-left: 4px; width: 65px; }
.play svg { width: 7px; height: 7px; }
.history { display: flex; flex: none; width: 511px; height: 15px; border-bottom: 1px solid #c9c9c9; }
.history button { flex: 1; height: 11px; margin-top: 1px; }
.history svg { width: 9px; height: 9px; }
.history .yellow { background: #f0ec21; }
.history .red { background: #f8434a; }
.marker { width: 6px; height: 16px; margin-left: -2px; }
.settings { margin-left: auto; margin-right: 6px; }
.settings svg { width: 8px; height: 8px; }

.taskbar { display: flex; height: 19px; background: linear-gradient(90deg, #050505 0, #0c0b0c 47%, #170a0d 57%, #31070b 66%, #2a0608 70%, #0b0a0b 76%, #070707 100%); color: #eee; font-family: "Open Sans", sans-serif; }
.start { width: 23px; }
.start svg { width: 8px; height: 8px; }
.search { display: flex; align-items: center; width: 158px; padding: 0 5px 0 4px; background: #efefef; color: #444; }
.ring { width: 9px; height: 9px; border: 2px solid #111; border-radius: 50%; margin-right: 4px; }
.search input { flex: 1; min-width: 0; font-size: 6px; outline: 0; }
.search input::placeholder { color: #444; opacity: 1; }
.search svg { width: 9px; height: 9px; }
.apps { display: flex; }
.apps button { width: 23px; border-bottom: 1px solid transparent; }
.apps .isopen { border-bottom-color: #e8a0a2; }
.apps .active { background: #75504f; }
.apps svg { width: 11px; height: 11px; }
.tray { display: flex; align-items: center; gap: 3px; margin-left: auto; }
.tray svg { width: 8px; height: 8px; }
.tray .trend { width: 10px; height: 10px; margin-right: 7px; }
.tray .pen { margin-right: 6px; }
.clock { display: flex; flex-direction: column; justify-content: center; align-items: center; width: 34px; line-height: 8px; }
.notice { width: 22px; border-right: 1px solid #444; }
.notice svg { width: 11px; height: 11px; }
</style>
